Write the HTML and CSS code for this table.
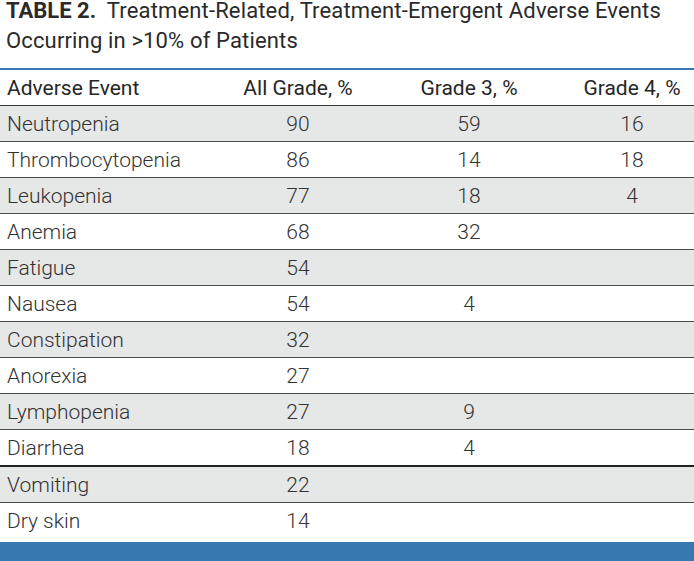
FILE: index.html
```html
<!DOCTYPE html>
<html>
<head>
<meta charset="utf-8">
<link rel="stylesheet" href="styles.css">
</head>
<body>
<div class="page">
  <h1 class="title">
    <span class="line"><span class="label">TABLE 2.</span>&nbsp; Treatment-Related, Treatment-Emergent Adverse Events</span>
    <span class="line">Occurring in &gt;10% of Patients</span>
  </h1>
  <table class="ae">
    <colgroup>
      <col class="c1"><col class="c2"><col class="c3"><col class="c4">
    </colgroup>
    <thead>
      <tr><th class="name">Adverse Event</th><th>All Grade, %</th><th>Grade 3, %</th><th class="g4">Grade 4, %</th></tr>
    </thead>
    <tbody>
      <tr class="alt"><td class="name">Neutropenia</td><td>90</td><td>59</td><td class="g4">16</td></tr>
      <tr><td class="name">Thrombocytopenia</td><td>86</td><td>14</td><td class="g4">18</td></tr>
      <tr class="alt"><td class="name">Leukopenia</td><td>77</td><td>18</td><td class="g4">4</td></tr>
      <tr><td class="name">Anemia</td><td>68</td><td>32</td><td class="g4"></td></tr>
      <tr class="alt"><td class="name">Fatigue</td><td>54</td><td></td><td class="g4"></td></tr>
      <tr><td class="name">Nausea</td><td>54</td><td>4</td><td class="g4"></td></tr>
      <tr class="alt"><td class="name">Constipation</td><td>32</td><td></td><td class="g4"></td></tr>
      <tr><td class="name">Anorexia</td><td>27</td><td></td><td class="g4"></td></tr>
      <tr class="alt"><td class="name">Lymphopenia</td><td>27</td><td>9</td><td class="g4"></td></tr>
      <tr class="thick"><td class="name">Diarrhea</td><td>18</td><td>4</td><td class="g4"></td></tr>
      <tr class="alt"><td class="name">Vomiting</td><td>22</td><td></td><td class="g4"></td></tr>
      <tr class="last"><td class="name">Dry skin</td><td>14</td><td></td><td class="g4"></td></tr>
    </tbody>
  </table>
  <div class="footer-bar"></div>
</div>
</body>
</html>
```

FILE: styles.css
```css
html, body {
  margin: 0;
  padding: 0;
  background: #ffffff;
}
body {
  font-family: Roboto, "Liberation Sans", sans-serif;
  color: #2b2b2b;
  width: 694px;
  height: 561px;
  overflow: hidden;
}
.page {
  display: flex;
  flex-direction: column;
}
.title {
  margin: 0;
  padding: 0 10px 0 6px;
  display: flex;
  flex-direction: column;
  gap: 8px;
  font-size: 22px;
  line-height: 22px;
  font-weight: 400;
  letter-spacing: 0.15px;
  color: #2a2a2a;
}
.title .line {
  display: block;
  white-space: nowrap;
}
.title .label {
  font-weight: 700;
  letter-spacing: 0;
}
.ae {
  margin-top: 16px;
  width: 694px;
  border-collapse: collapse;
  table-layout: fixed;
  border-top: 2px solid #3776b0;
  font-size: 21px;
}
.c1 { width: 213px; }
.c2 { width: 170px; }
.c3 { width: 172px; }
.c4 { width: 139px; }
.ae th, .ae td {
  padding: 0;
  text-align: center;
  vertical-align: middle;
}
.ae th {
  height: 35px;
  font-weight: 400;
  color: #262626;
  border-bottom: 1px solid #333;
}
.ae td {
  height: 35px;
  font-weight: 300;
  color: #333;
  border-bottom: 1px solid #4a4a4a;
}
.ae .name {
  text-align: left;
  padding-left: 7px;
}
.ae .g4 {
  padding-left: 15px;
}
.ae tr.alt td {
  background: #e6e7e7;
}
.ae tr.thick td {
  border-bottom: 2px solid #222;
}
.ae tr.last td {
  border-bottom: none;
  height: 36px;
}
.footer-bar {
  margin-top: 3px;
  height: 20px;
  background: #3878b0;
}
```
